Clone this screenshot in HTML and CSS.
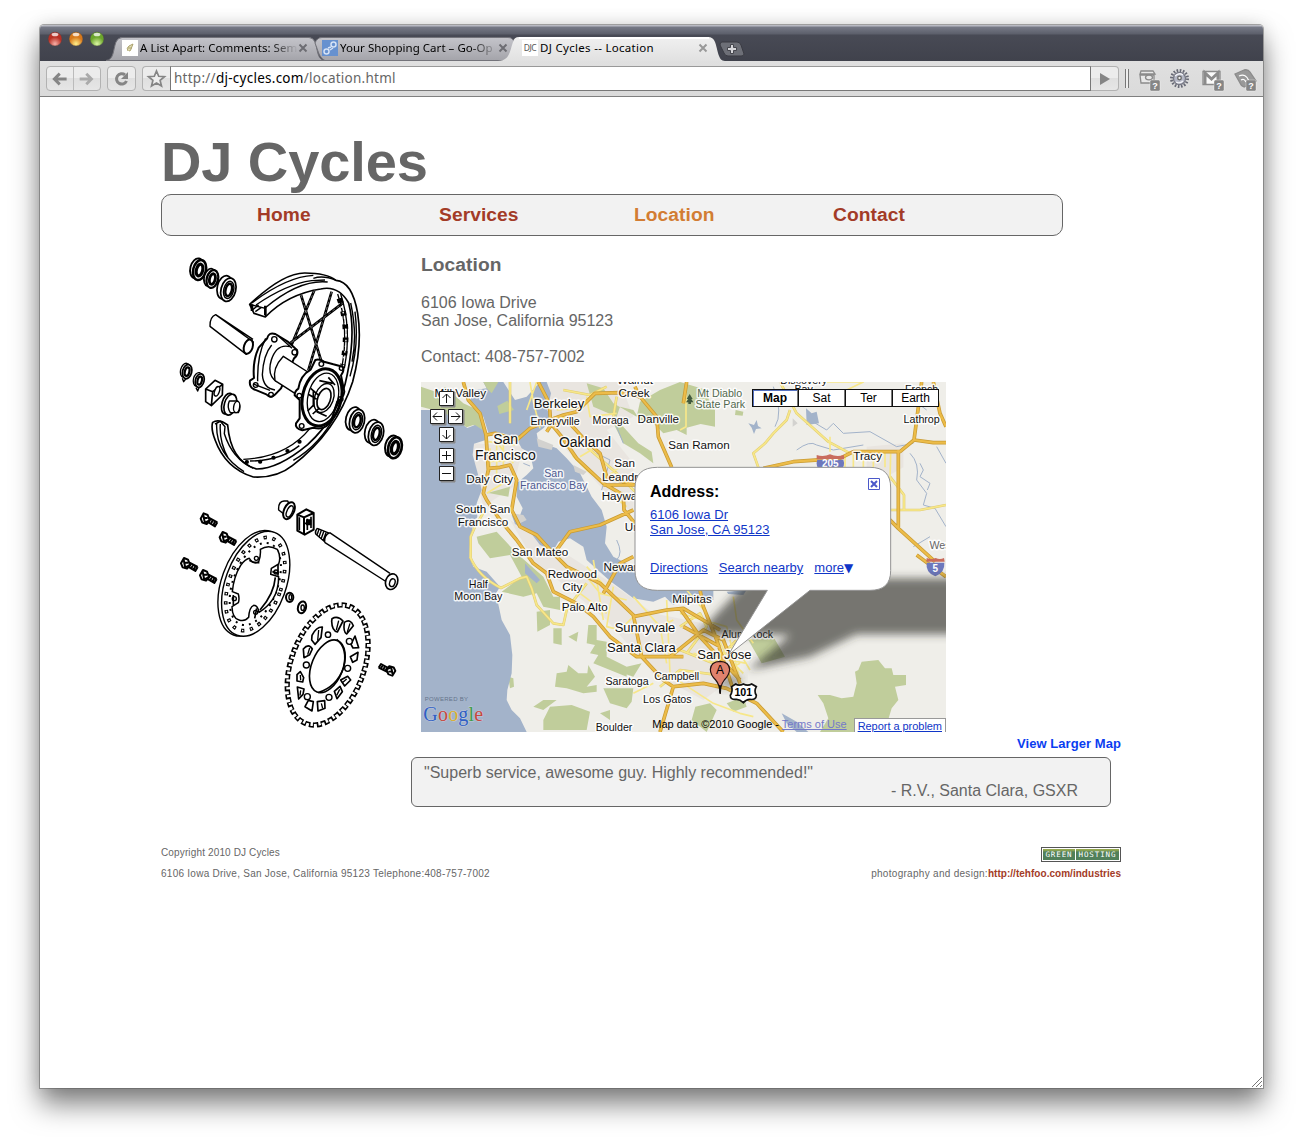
FILE: index.html
```html
<!DOCTYPE html>
<html lang="en">
<head>
<meta charset="utf-8">
<title>DJ Cycles -- Location</title>
<link rel="stylesheet" href="styles.css">
</head>
<body>
<div class="window">
  <div class="tabstrip">
    <svg class="tabshapes" width="1223" height="36" viewBox="40 25 1223 36">
      <defs>
        <linearGradient id="tabg" x1="0" y1="0" x2="0" y2="1"><stop offset="0" stop-color="#c4c4ca"/><stop offset="1" stop-color="#a4a4aa"/></linearGradient>
        <linearGradient id="actg" x1="0" y1="0" x2="0" y2="1"><stop offset="0" stop-color="#f0f0f0"/><stop offset="1" stop-color="#e1e1e1"/></linearGradient>
        <radialGradient id="red" cy=".85"><stop offset="0" stop-color="#f7b0a8"/><stop offset="1" stop-color="#b92f24"/></radialGradient>
        <radialGradient id="amber" cy=".85"><stop offset="0" stop-color="#fff08c"/><stop offset="1" stop-color="#d8791b"/></radialGradient>
        <radialGradient id="green" cy=".85"><stop offset="0" stop-color="#dcf7a4"/><stop offset="1" stop-color="#6ba52b"/></radialGradient>
      </defs>
      <path d="M106 60.500C114 60 113 50 116 42Q118 37.500 122 37.500H309Q313 37.500 315 42C318 50 317 60 325 60.500Z" fill="url(#tabg)" stroke="#73737a"/>
      <path d="M315 43Q317 37.500 322 37.500H508Q513 37.500 514 42V56Q510 60.500 505 60.500H325C319 58 318 50 315 43Z" fill="url(#tabg)" stroke="#73737a"/>
      <path d="M498 61C510 61 510 50 513 42Q514 37 519 37H708Q713 37 715 42C718 50 718 61 725 61Z" fill="url(#actg)"/>
      <path d="M519 38H709" stroke="#fff" stroke-width="2"/>
      <path d="M722 42H737Q740 42 741 45L744 54Q744 56 741 56H728Q725 56 724 53L720 45Q720 42 722 42Z" fill="#6d6f77" stroke="#3a3b43"/>
      <path d="M730.500 44.500h3v3h3v3h-3v3h-3v-3h-3v-3h3z" fill="#d6d6da" stroke="#44454c"/>
      <g stroke="#444" stroke-opacity=".35"><circle cx="55" cy="39" r="6.900" fill="url(#red)"/><circle cx="76" cy="39" r="6.900" fill="url(#amber)"/><circle cx="97" cy="39" r="6.900" fill="url(#green)"/></g>
      <g fill="#fff" opacity=".75"><ellipse cx="55" cy="34.500" rx="3.400" ry="1.800"/><ellipse cx="76" cy="34.500" rx="3.400" ry="1.800"/><ellipse cx="97" cy="34.500" rx="3.400" ry="1.800"/></g>
    </svg>
    <div class="tabs">
      <div class="tab">
        <svg class="fav" viewBox="0 0 16 16"><path fill="#fff" d="M0 0h16v16H0z"/><path d="M6 11Q4 8 7 6L11 4L9 9Q9 11 7 11M6 8h4" fill="#e4dfb5" stroke="#aaa16d"/></svg>
        <span class="label faded">A List Apart: Comments: Sem</span>
        <svg class="close" viewBox="0 0 10 10"><path d="M1.500 1.500l7 7m0-7l-7 7"/></svg>
      </div>
      <div class="tab">
        <svg class="fav" viewBox="0 0 16 16"><path fill="#6691cf" d="M0 0h16v16H0z"/><g fill="none" stroke="#d5e2f5" stroke-width="1.500"><circle cx="4.500" cy="11.500" r="2.500"/><circle cx="11.500" cy="4.500" r="2.500"/><path d="M6 8l3-1M8 10l3-2"/></g></svg>
        <span class="label faded">Your Shopping Cart – Go-Op</span>
        <svg class="close" viewBox="0 0 10 10"><path d="M1.500 1.500l7 7m0-7l-7 7"/></svg>
      </div>
      <div class="tab">
        <span class="fav djc">DJC</span>
        <span class="label third">DJ Cycles -- Location</span>
        <svg class="close light" viewBox="0 0 10 10"><path d="M1.500 1.500l7 7m0-7l-7 7"/></svg>
      </div>
    </div>
  </div>
  <div class="toolbar">
    <div class="btn pair">
      <svg width="27" height="23" viewBox="0 0 27 23"><path d="M20 12H8m5-5.500L7.500 12l5.500 5.500" fill="none" stroke="#858585" stroke-width="3"/></svg>
      <svg class="fwd" width="27" height="23" viewBox="0 0 27 23"><path d="M6 12h12m-5-5.500l5.500 5.500-5.500 5.500" fill="none" stroke="#aaa" stroke-width="3"/></svg>
    </div>
    <div class="btn reload"><svg width="27" height="23" viewBox="0 0 27 23"><path d="M17 7.800A5.200 5.200 0 1 0 18.500 14" fill="none" stroke="#858585" stroke-width="3"/><path d="M20 5v7h-7z" fill="#858585"/></svg></div>
    <div class="btn star"><svg width="27" height="23" viewBox="0 0 27 23"><path d="M13.500 4l2.200 5.300 5.800.4-4.400 3.700 1.400 5.600-5-3-5 3 1.400-5.600-4.400-3.700 5.800-.4z" fill="#eee" stroke="#858585" stroke-width="1.700"/></svg></div>
    <div class="url"><span>http://<b>dj-cycles.com</b>/location.html</span></div>
    <div class="btn go"><svg width="27" height="23" viewBox="0 0 27 23"><path d="M9 6v12l10-6z" fill="#858585"/></svg></div>
    <div class="sep"></div>
    <svg class="exts" width="122" height="26" viewBox="1137 66 122 26">
      <g fill="#e8e8e8" stroke="#8b8b8b" stroke-width="1.300">
        <path d="M1141 71h12l2 3h-15zM1140 75h14v8h-13z"/><ellipse cx="1149" cy="77.500" rx="3.500" ry="2.300"/>
        <circle cx="1179.500" cy="78.500" r="8" fill="none" stroke="#686a76" stroke-width="3" stroke-dasharray="1.600 1.540"/>
        <circle cx="1179.500" cy="78.500" r="6" fill="#b5b8c6" stroke="#777985"/><path d="M1175 76q4-4 8-1M1176 82q4 2 7-1" stroke="#f4f4f8" fill="none"/><circle cx="1179.500" cy="78" r="1.800" fill="#eee" stroke="#666"/>
        <path d="M1203 71.500h17v13h-17z" fill="#fafafa"/><path d="M1205 84V73l6.500 6 6.500-6v11" fill="none" stroke-width="3"/>
        <path d="M1235 74l9-4q4-1 6 2l6 9-12 6q-3-1-4-4z" fill="#999"/><path d="M1239 76q7-3 10 5m-8-1q3-2 5 2" fill="none" stroke="#fff"/>
      </g>
      <g fill="#858585" stroke="#fff" stroke-opacity=".5" stroke-width=".7"><rect x="1150" y="80" width="10" height="11" rx="1.500"/><rect x="1214" y="80" width="10" height="11" rx="1.500"/><rect x="1246" y="80" width="10" height="11" rx="1.500"/></g>
      <g class="q"><text x="1155" y="89">?</text><text x="1219" y="89">?</text><text x="1251" y="89">?</text></g>
    </svg>
  </div>
  <div class="page">
    <div class="site">
      <h1>DJ Cycles</h1>
      <nav class="nav"><a>Home</a><a>Services</a><a class="current">Location</a><a>Contact</a></nav>
      <div class="main">
        <svg class="art" width="240" height="490" viewBox="0 0 720 1470">
          <defs>
            <g id="bearing"><ellipse cx="-7" cy="-4" rx="21" ry="34" fill="#fff" stroke-width="5" transform="rotate(14)"/><ellipse cx="5" rx="21" ry="34" fill="#fff" stroke-width="5" transform="rotate(14)"/><ellipse cx="6" rx="14" ry="25" transform="rotate(14)"/><ellipse cx="6" rx="9" ry="18" stroke-width="7" transform="rotate(14)"/></g>
            <g id="ring"><ellipse cx="-5" cy="-3" rx="20" ry="32" fill="#fff" stroke-width="6" transform="rotate(14)"/><ellipse cx="5" rx="20" ry="32" fill="#fff" stroke-width="8" transform="rotate(14)"/><ellipse cx="5" rx="10" ry="19" stroke-width="10" transform="rotate(14)"/></g>
            <g id="bolt"><path d="M-13-2L-4-18L8-13L14 3L5 14L-8 10Z" fill="#fff" stroke-width="6"/><path d="M-5-13L0 12M-6-4H8M0 10L12 4M11-5L37 9M8 8L30 21L37 9M16-2l-5 12M23 2l-5 12M30 6l-5 12" stroke-width="6"/></g>
          </defs>
          <g fill="none" stroke="#000" stroke-width="4.200" stroke-linejoin="round">
            <use href="#ring" transform="translate(84 74) scale(.95)"/><use href="#ring" transform="translate(123 101) scale(.85)"/><use href="#bearing" transform="translate(170 133) scale(1.050)"/>
            <path d="M137 209Q119 216 120 244L229 328L250 291ZM137 209L249 283" fill="#fff"/><ellipse cx="235" cy="305" rx="13" ry="22" transform="rotate(18 235 305)" fill="#fff" stroke-width="6"/>
            <use href="#ring" transform="translate(48 379) scale(.68)"/><path d="M37 400l4 10 6-8"/>
            <use href="#ring" transform="translate(86 406) scale(.65)"/><path d="M78 428l5 10 4-10"/>
            <path d="M107 432L135 406L158 418L157 450L124 482L107 470ZM107 432L128 440L158 418M128 440L124 482" stroke-width="5"/><ellipse cx="141" cy="439" rx="7" ry="15" transform="rotate(20 141 439)" fill="#fff"/>
            <ellipse cx="172" cy="476" rx="16" ry="32" fill="#fff" stroke-width="5" transform="rotate(16 172 476)"/><ellipse cx="181" cy="479" rx="18" ry="32" fill="#fff" stroke-width="5" transform="rotate(16 181 479)"/>
            <path d="M178 468L203 468Q216 484 205 503L181 503Q170 486 178 468Z" fill="#fff"/><ellipse cx="200" cy="486" rx="9" ry="17" transform="rotate(10 200 486)" fill="#fff"/>

            <path d="M239 178Q340 83 405 84Q470 84 498 106Q547 110 563 205Q578 300 548 410Q500 560 367 662Q320 700 250 696Q166 670 135 584Q122 551 128 532Q147 520 173 540Q182 650 260 672Q325 672 413 599Q510 510 532 387Q558 260 536 174Q505 120 452 132Q351 148 286 216L252 205L239 178Z" fill="#fff" stroke-width="5"/>
            <path d="M239 178L286 190L286 216M248 194L266 180M286 188Q390 102 473 111M245 174Q350 95 430 91M258 180Q350 117 425 107L465 105M256 200L273 188M498 106Q460 90 430 100M555 200Q568 300 540 394M542 174Q563 270 546 350M499 505Q450 600 370 646M135 537L151 529L165 545L163 566Q187 641 250 670M140 536Q136 625 222 680M151 537Q147 590 175 640M220 643Q350 637 420 550M240 648Q330 648 388 602"/>
            <path d="M286 182v28M246 178v20" stroke-width="8"/>
            <g stroke-width="8"><path d="M433 136L363 304M485 140L415 376M393 150L455 352M520 173L348 304"/></g>
            <g stroke="#fff" stroke-width="1.200" stroke-dasharray="9 7"><path d="M433 136L363 304M485 140L415 376M393 150L455 352M520 173L348 304"/></g>
            <path d="M503 147Q538 250 515 370" stroke-width="4"/><path d="M512 147Q546 250 523 370" stroke-width="4"/><path d="M508 160Q540 250 518 360" stroke-width="17" stroke-dasharray="14 26"/><path d="M514 184Q538 255 521 340" stroke="#fff" stroke-width="4" stroke-dasharray="5 12"/>
            <path d="M230 651h1M270 650h1M310 638h1M352 618h1M388 590h1" stroke-width="12" stroke-linecap="round"/>

            <path d="M291 281Q296 260 316 267L352 289L381 315Q386 330 372 340L333 430L315 449Q303 462 289 448L250 432Q237 424 240 407L252 399Q247 350 266 308Z" fill="#fff" stroke-width="6"/>
            <path d="M287 280Q261 330 263 409M305 300Q280 330 277 389Q280 430 315 435M360 305Q320 295 304 345Q290 390 320 410M251 417l49 19M322 270l44 40"/>
            <circle cx="313" cy="283" r="8"/><circle cx="257" cy="420" r="7"/><circle cx="303" cy="449" r="7"/><circle cx="374" cy="322" r="8"/>
            <path d="M340 334L418 384L390 455L315 407Q306 370 340 334Z" fill="#fff" stroke="none"/><path d="M418 384L340 334Q306 370 315 407L390 455"/>
            <path d="M436 345Q449 341 462 350L490 358L518 365Q524 377 513 391L523 440Q520 462 502 469L485 523Q469 558 430 548L397 556Q374 550 378 535L389 520L389 465L374 451Q374 438 385 431Q391 391 422 374Z" fill="#fff" stroke-width="6"/>
            <ellipse cx="456" cy="457" rx="58" ry="87" transform="rotate(14 456 457)" stroke-width="9"/><ellipse cx="459" cy="457" rx="45" ry="74" transform="rotate(14 459 457)" stroke-width="4"/>
            <ellipse cx="462" cy="459" rx="28" ry="45" transform="rotate(20 462 459)"/><ellipse cx="462" cy="462" rx="19" ry="33" transform="rotate(20 462 462)" stroke-width="5"/>
            <path d="M415 448L440 463M422 430L447 452M413 498L432 479M428 507L446 491M448 407L488 415M475 397L495 420M430 435v50M440 500l30 14" stroke-width="5"/>
            <circle cx="454" cy="357" r="7"/><circle cx="514" cy="370" r="6"/><circle cx="388" cy="452" r="7"/><circle cx="395" cy="543" r="7"/><circle cx="512" cy="462" r="7"/>
            <use href="#bearing" transform="translate(556 527) scale(1.050)"/><use href="#bearing" transform="translate(613 565) scale(1.050)"/><use href="#ring" transform="translate(670 607)"/>
          </g>
          <g transform="translate(0 735)" fill="none" stroke="#000" stroke-width="4.200" stroke-linejoin="round">
            <path d="M342 33Q324 35 326 60L347 76Q367 53 353 33Z"/><ellipse cx="357" cy="62" rx="15" ry="27" transform="rotate(24 357 62)" fill="#fff" stroke-width="6"/><ellipse cx="359" cy="64" rx="8" ry="18" transform="rotate(24 359 64)"/>
            <path d="M382 74L409 58L431 69L431 119L404 134L382 122ZM382 74L402 82L431 69M402 82V134" fill="#fff" stroke-width="6"/><path d="M412 86v34M423 80v34M405 100h18M388 82v39" stroke-width="5"/><path d="M410 90h12v14h-12z" fill="#000"/>
            <path d="M438 120L446 115L659 252L648 278L440 134Z" fill="#fff" stroke="none"/><path d="M479 128L660 250M464 157L650 276M479 128Q462 136 464 157M442 115L479 130M437 132L464 155M442 115Q434 124 437 132M447 118l-6 17M454 121l-7 20M461 125l-7 20M468 128l-8 22"/><ellipse cx="665" cy="275" rx="18" ry="24" fill="#fff" transform="rotate(18 665 275)" stroke-width="5"/><ellipse cx="667" cy="278" rx="8" ry="12" transform="rotate(18 667 278)"/>
            <use href="#bolt" transform="translate(105 88)"/><use href="#bolt" transform="translate(162 144)"/><use href="#bolt" transform="translate(46 222)"/><use href="#bolt" transform="translate(103 258)"/>
            <g transform="rotate(20 253 281)"><ellipse cx="247" cy="282" rx="92" ry="165" fill="#fff"/><ellipse cx="257" cy="280" rx="91" ry="164" fill="#fff"/>
              <ellipse cx="256" cy="281" rx="78" ry="146" stroke-width="11" stroke-dasharray="10 17"/><ellipse cx="256" cy="281" rx="78" ry="146" stroke="#fff" stroke-width="4" stroke-dasharray="4 23" stroke-dashoffset="-3"/><ellipse cx="256" cy="281" rx="67" ry="129" stroke-width="6" stroke-dasharray="6 15"/></g>
            <path d="M238 205Q250 224 266 215Q273 195 271 178Q295 162 322 178Q334 200 326 222L304 235L302 253L326 260Q326 300 308 328Q292 352 267 367Q263 346 251 346Q238 351 236 382Q224 396 207 390Q187 385 186 350L205 338Q209 326 205 312L187 305Q191 260 212 226Q226 207 238 205Z" fill="#fff" stroke-width="4.500"/>
            <path d="M238 211q14 9 30 7M307 245l20 5M324 225v32M190 315v30M260 355l-6 30M316 262q-4 50-46 98" stroke-width="5"/>
            <circle cx="259" cy="205" r="6"/><circle cx="318" cy="246" r="6"/><circle cx="193" cy="326" r="6"/><circle cx="257" cy="367" r="6"/>
            <ellipse cx="359" cy="322" rx="11" ry="14" fill="#fff" stroke-width="6"/><ellipse cx="361" cy="322" rx="4" ry="8"/><ellipse cx="396" cy="352" rx="12" ry="18" fill="#fff" stroke-width="6" transform="rotate(15 396 352)"/><ellipse cx="398" cy="353" rx="5" ry="8"/>
            <g transform="rotate(20 473 525)"><ellipse cx="473" cy="525" rx="110" ry="188" stroke-width="15" pathLength="960" stroke-dasharray="15 9"/><ellipse cx="473" cy="525" rx="104" ry="182" fill="#fff" stroke-width="4.500"/><ellipse cx="473" cy="525" rx="106" ry="184" stroke="#fff" stroke-width="13" pathLength="960" stroke-dasharray="7 17" stroke-dashoffset="-4"/></g>
            <g transform="rotate(22 472 529)"><ellipse cx="472" cy="529" rx="47" ry="83" stroke-width="5"/></g><path d="M500 448Q535 475 520 535Q500 590 445 608" stroke-width="5"/>
            <g fill="#fff" stroke-width="5"><path d="M486 386Q503 376 519 393L502 426Q486 423 485 394Z"/><path d="M523 397Q542 385 550 407L530 432Q519 426 523 397Z"/><path d="M426 436Q439 410 457 411L453 443L435 463L425 450Z"/><path d="M400 477Q416 458 427 477L419 494L402 503Z"/><path d="M543 463L555 438L566 473L549 474Z"/><path d="M541 500L564 487L561 510L548 517Z"/><path d="M381 554L391 545L401 563L398 576L381 573Z"/><path d="M382 591L402 597L399 613L386 627Z"/><path d="M405 650L415 631L430 635L426 663Z"/><path d="M442 635L464 632L465 655L444 663Z"/><path d="M493 604L510 589L517 605L501 626Z"/><path d="M512 570L533 559L542 570L524 588Z"/></g>
            <g fill="#fff"><circle cx="474" cy="434" r="8"/><circle cx="538" cy="454" r="9"/><circle cx="409" cy="525" r="9"/><circle cx="533" cy="535" r="9"/><circle cx="412" cy="620" r="9"/><circle cx="477" cy="622" r="9"/></g>
            <path d="M506 392l-7 28M540 400l-8 26M446 420l-3 32M419 474l-6 20M391 555l1 16M392 601l-2 16M454 640l4 15M530 567l-14 12M509 598l-9 18" stroke-width="4"/>
            <use href="#bolt" transform="translate(663 541) rotate(180) scale(1 .9)"/>
          </g>
        </svg>
        <div class="content">
          <h2>Location</h2>
          <p>6106 Iowa Drive<br>San Jose, California 95123</p>
          <p>Contact: 408-757-7002</p>
          <div class="map">
            <svg width="525" height="350" viewBox="3 6 1575 1050">
              <defs><filter id="blur" x="-20%" y="-50%" width="140%" height="200%"><feGaussianBlur stdDeviation="12"/></filter></defs>
              <path fill="#efeee9" d="M0 0H1600V1070H0z"/>
              <path fill="#e9e5e0" d="M390 6L600 6L640 110L560 150L640 250V400L560 340L440 210L380 110ZM160 190L310 200L280 320L190 380L160 260ZM270 420L420 510L560 600L700 700L900 740L960 880L850 960L700 880L560 720L340 540ZM1340 200L1450 190L1450 262L1400 290L1340 262Z"/>
              <path fill="#c0cd9b" d="M3 20L60 40L75 20L130 70L185 95L197 155L160 135L140 142L60 95L3 80ZM500 10L550 25L580 70L650 110L660 65L720 30L780 6L860 30L870 75L885 90V140L842 132L800 143L800 165L770 150L730 160L700 130L660 120L640 90L600 80L590 110L520 80ZM600 130L655 190L695 215L700 250L660 220L610 190L580 130ZM235 75L262 60L280 90L238 100ZM170 470L230 455L290 520L370 590L400 650L420 650L420 690L370 680L350 640L310 650L245 635L305 590L270 525L210 535L175 490ZM350 695L390 690L390 735L352 755ZM400 745L425 745L425 795L400 790ZM410 880L440 875L445 855L475 880L502 880L505 855L525 890L500 920L530 915L530 935L490 940L440 925L405 920ZM445 770L475 755L470 785ZM505 735L530 735L530 780L560 785L560 830L620 860L620 890L570 870L520 850L535 825L510 820L525 795L500 790ZM550 925L640 925L635 965L620 985L570 970ZM370 1020L390 980L455 975L510 995L500 1050L370 1050ZM540 1000L570 990L570 1020ZM265 890L280 895L282 920L270 925ZM340 980L370 960L410 960L370 990ZM620 860L665 850L640 890L610 880ZM985 780L1060 770L1095 830L1025 850ZM1193 945L1230 945L1265 955L1300 950L1310 910L1305 875L1315 870L1325 845L1375 840L1395 865L1415 865L1420 885L1458 885L1458 915L1425 920L1435 960L1415 985L1405 1018L1405 1056H1200L1225 1015L1210 970ZM826 980L870 970L890 990L860 1056L815 1020ZM920 970L970 950L980 980L940 995ZM200 340L270 320L265 350L210 340ZM947 90L970 95L968 107L945 105Z"/>
              <g fill="#a3b3ca">
                <path d="M3 90L60 90L100 115L142 144L165 135L198 156L197 180L162 191L158 225L176 290L185 330L170 370L172 410L158 440L150 490L148 528L160 560L200 575L240 620L228 640L245 720L270 765L277 825L275 880L262 930L260 960L275 990L300 1015L320 1056H3Z"/>
                <path d="M150 60L165 30L200 25L190 6H250L285 60L320 50L360 6H380L393 40L382 90L395 120L370 145L350 160L355 185L410 205L440 235L480 280L515 350L545 390L560 440L555 490L580 530L640 560L700 600L880 625L880 660L790 655L760 675L735 650L700 665L640 655L600 625L570 603L500 540L490 500L450 475L415 485L400 512L360 495L335 462L285 432L275 405L298 412L308 385L290 350L290 310L320 285L340 265L330 220L305 205L290 177L250 160L205 158L190 110Z"/>
                <path d="M920 635L980 630L970 645L925 642ZM1158 85L1175 100L1190 95L1197 130L1160 135ZM985 130L1002 135L1010 120L1014 138L1025 145L1008 147L1002 162L995 143Z"/>
                <path d="M1085 1000L1130 1025L1165 1056H1130L1100 1030ZM315 550L360 600L350 610L315 580Z"/>
              </g>
              <path fill="#c0cd9b" d="M190 6H235L215 40L200 25ZM232 78L262 62L282 90L238 102Z"/>
              <path fill="#d3d2cf" d="M350 175L400 195L395 210L355 200ZM275 400L310 405L320 420L300 430ZM460 255L500 275L490 285L465 275ZM1118 115l15 15-15 10z"/>
              <g fill="none" stroke="#a3b3ca" stroke-width="3"><path d="M1060 20Q1090 100 1065 140M1130 210Q1170 180 1190 195L1240 210L1330 195M1170 120L1220 150L1240 130L1270 160L1350 155L1430 200L1480 190M1470 220Q1500 250 1490 300L1520 340L1510 375L1545 385L1578 440M530 220L570 240L545 330M590 140L610 190M590 480Q610 520 590 540M310 250l20 8M1550 200L1578 250M1500 250l10 20-10 20 30 20-8 20M1380 50l50 20 50-10 40 30M1480 500l50-30"/></g>
              <g fill="none" stroke="#e0cc72" stroke-width="8" stroke-linejoin="round"><path d="M150 530Q175 590 243 624L300 595L320 590L335 625L350 675L400 730L430 735L440 690L465 655L500 610M152 530V470L165 440L195 390M270 130V6M430 30L510 45L560 20M590 50L580 110M660 350L590 280L500 200L450 185M1080 6L1130 100L1225 185L1290 220M1110 90L1100 120L1060 160L1035 190L1000 220L1015 262M1410 290L1452 345L1452 390M1412 390L1500 390L1578 375M780 740L840 700L860 740L800 820M720 920L780 870L930 890M780 810L880 850L950 780"/></g>
              <g fill="none" stroke="#f7e789" stroke-width="5" stroke-linejoin="round"><path d="M150 530Q175 590 243 624L300 595L320 590L335 625L350 675L400 730L430 735L440 690L465 655L500 610M152 530V470L165 440L195 390M270 130V6M320 90L350 6M430 30L510 45L560 20M500 50L510 110L590 100M590 50L580 110M660 350L590 280L500 200L450 185M440 170L460 230L500 270L580 330M330 6L340 65L360 145M1080 6L1130 100L1225 185L1290 220M1110 90L1100 120L1060 160L1035 190L1000 220L1015 262M1220 6L1330 6L1280 30M1410 290L1452 345L1452 390M1412 390L1500 390L1578 375M1412 220L1410 300L1390 300M1230 170V215M1300 220V262M1330 215V262M1360 225V262M1395 218V262M780 150L798 140V6M940 650L950 720L1000 790M780 740L840 700L860 740L800 820M720 920L780 870L930 890M780 810L880 850L950 780M800 630L860 700L920 830L970 880M640 940L700 910M700 750L760 720M500 590L540 640L620 660M480 640L560 700M500 560L640 710L610 740M520 540L550 720M580 620L560 740L640 760M640 650L720 740L740 850M740 660L750 880M780 700L920 740L960 900M820 820L980 850M230 160L230 300M205 185L285 195M205 215L290 230M205 245L280 240M250 180L250 260M210 205V275M200 340L250 310M225 180L280 250M780 905L880 970L960 1000L1000 1010M410 90L470 85M400 75L460 70M400 110L450 115M455 200L500 190M480 230L530 200M550 300L600 260M570 340L620 380M940 800V880M960 820L990 870M900 880L960 850M1250 235V262M1275 232V262"/></g>
              <path id="hw" d="M130 6L145 60L180 100L198 165L225 160L290 180L330 145L390 120L430 105L470 95L525 40L600 38L660 50L710 110L715 170L755 262M355 6L388 70L392 130L425 170L470 235L550 310L610 345L612 390L645 430M380 155L390 140L440 120L495 180L540 220L560 290L645 315M550 315H645M645 20L660 55M198 165L205 270L190 340L200 360L240 420L290 480L340 550L380 580L400 635L470 670L520 710L570 770L650 830L720 830L790 830M205 265L240 262L270 255L290 300L275 390L300 440L350 465L400 520L440 560L540 610L640 705L665 830L730 900L760 920L850 910L920 925L1010 970L1090 1056M410 510L450 455L540 435L640 390M550 640L600 550L640 530M640 710L740 690L790 685L900 750M780 685L840 770L960 900M750 830L850 750L910 780L960 910M840 630L850 680L890 780L940 930M790 740L900 800M760 920L720 1056M800 6L790 70M1030 265L1120 245L1260 235L1300 215L1440 215L1482 180L1490 120L1505 6M1482 180L1540 188H1578M1435 210V445L1400 410M1435 445L1545 545M1540 6L1560 100L1578 140M1490 525L1578 590" fill="none" stroke="#c99b33" stroke-width="11" stroke-linejoin="round"/>
              <path d="M130 6L145 60L180 100L198 165L225 160L290 180L330 145L390 120L430 105L470 95L525 40L600 38L660 50L710 110L715 170L755 262M355 6L388 70L392 130L425 170L470 235L550 310L610 345L612 390L645 430M380 155L390 140L440 120L495 180L540 220L560 290L645 315M550 315H645M645 20L660 55M198 165L205 270L190 340L200 360L240 420L290 480L340 550L380 580L400 635L470 670L520 710L570 770L650 830L720 830L790 830M205 265L240 262L270 255L290 300L275 390L300 440L350 465L400 520L440 560L540 610L640 705L665 830L730 900L760 920L850 910L920 925L1010 970L1090 1056M410 510L450 455L540 435L640 390M550 640L600 550L640 530M640 710L740 690L790 685L900 750M780 685L840 770L960 900M750 830L850 750L910 780L960 910M840 630L850 680L890 780L940 930M790 740L900 800M760 920L720 1056M800 6L790 70M1030 265L1120 245L1260 235L1300 215L1440 215L1482 180L1490 120L1505 6M1482 180L1540 188H1578M1435 210V445L1400 410M1435 445L1545 545M1540 6L1560 100L1578 140M1490 525L1578 590" fill="none" stroke="#ecbc49" stroke-width="6.500" stroke-linejoin="round"/>
              <g><path d="M1190 225Q1210 232 1230 223Q1250 232 1272 225V238H1190Z" fill="#c96c5d"/><path d="M1192 239h78q8 20-12 36h-54q-20-16-12-36" fill="#6d78bd"/><path d="M1520 534Q1535 540 1547 534Q1560 540 1572 534L1574 545H1519Z" fill="#c96c5d"/><path d="M1520 548H1573Q1575 578 1546 589Q1516 578 1520 548Z" fill="#6d78bd"/></g>
              <g class="shield"><text x="1231" y="261">205</text><text x="1546" y="576">5</text></g>
              <path d="M809 42l-9 15h5l-7 10h7v5h8v-5h7l-6-10h4z" fill="#40593d"/>
              <g class="lbl">
                <g class="s14"><text x="257" y="193">San</text><text x="256" y="241">Francisco</text><text x="495" y="200">Oakland</text></g>
                <g class="s13"><text x="417" y="83">Berkeley</text><text x="675" y="755">Sunnyvale</text><text x="664" y="815">Santa Clara</text><text x="913" y="838">San Jose</text></g>
                <g class="s12"><text x="121" y="51">Mill Valley</text><text x="642" y="52">Creek</text><text x="645" y="13">Walnut</text><text x="715" y="129">Danville</text><text x="837" y="206">San Ramon</text><text x="209" y="309">Daly City</text><text x="189" y="398">South San</text><text x="189" y="438">Francisco</text><text x="360" y="527">San Mateo</text><text x="614" y="261">San</text><text x="610" y="304">Leandro</text><text x="614" y="360">Hayward</text><text x="660" y="453">Union</text><text x="457" y="594">Redwood</text><text x="457" y="632">City</text><text x="610" y="572">Newark</text><text x="494" y="692">Palo Alto</text><text x="816" y="668">Milpitas</text><text x="1343" y="240">Tracy</text></g>
                <g class="s11"><text x="405" y="135">Emeryville</text><text x="572" y="131">Moraga</text><text x="175" y="623">Half</text><text x="175" y="659">Moon Bay</text><text x="621" y="916">Saratoga</text><text x="770" y="901">Campbell</text><text x="742" y="969">Los Gatos</text><text x="582" y="1053">Boulder</text><text x="982" y="773">Alum Rock</text><text x="1505" y="128">Lathrop</text><text x="1151" y="13">Discovery</text><text x="1151" y="40">Bay</text><text x="1505" y="40">French</text><text x="1560" y="507" fill="#666">Wes</text></g>
                <g class="s11 park"><text x="899" y="51">Mt Diablo</text><text x="901" y="83">State Park</text></g>
                <g class="s11 bay"><text x="401" y="290">San</text><text x="401" y="326">Francisco Bay</text></g>
              </g>
              <path filter="url(#blur)" fill="#30302c" fill-opacity=".64" d="M830 765L990 595H1650V763H1310L1170 830L985 870L1110 765Z"/>
              <path filter="url(#blur)" fill="#30302c" fill-opacity=".6" d="M900 925L915 895L968 890L955 912Z"/>
              <path d="M712 262H1350Q1412 262 1412 324V572Q1412 631 1350 631H1170L925 825L1042 631H712Q645 631 645 572V324Q645 262 712 262Z" fill="#fff" stroke="#939393" stroke-width="3"/>
              <path d="M900 940Q900 915 887 900Q871 885 871 868Q873 845 900 844Q927 845 929 868Q928 885 913 900Q901 915 901 940Z" fill="#e0826d" stroke="#211" stroke-width="3.500"/><path d="M900 916v22" stroke="#111" stroke-width="6"/>
              <text class="pin" x="900" y="883">A</text>
              <path d="M935 920l12-8q10 7 23 0q13 7 25 0l14 8q-8 14 0 26q0 15-20 12q-10 0-19 10q-10-10-20-10q-20 2-19-12q8-12 4-26z" fill="#fff" stroke="#111" stroke-width="5"/><text class="route" x="970" y="948">101</text>
              <text class="powered" x="14" y="963">POWERED BY</text>
              <text class="google" x="10" y="1022"><tspan fill="#315fc4">G</tspan><tspan fill="#c8473f">o</tspan><tspan fill="#d9ad2e">o</tspan><tspan fill="#315fc4">g</tspan><tspan fill="#3f9c4c">l</tspan><tspan fill="#c8473f">e</tspan></text>
            </svg>
            <svg class="pan" width="36" height="96" viewBox="429 389 36 96">
              <g stroke="#888" fill="#888"><path d="M441 392h14v15h-14zM432 410h14v15h-14zM450 410h14v15h-14zM441 429h14v14h-14zM441 449h14v15h-14zM441 467h14v15h-14z"/></g>
              <g fill="#fff" stroke="#222"><path d="M439.500 391.500h14v14h-14zM430.500 409.500h14v14h-14zM448.500 409.500h14v14h-14zM439.500 427.500h14v14h-14zM439.500 448.500h14v14h-14zM439.500 466.500h14v14h-14z"/></g>
              <path fill="none" stroke="#111" d="M446.500 403v-9m-4 4l4-4 4 4M442 416.500h-9m4-4l-4 4 4 4M451 416.500h9m-4-4l4 4-4 4M446.500 430v9m-4-4l4 4 4-4M442 455.500h9M446.500 451v9M442 473.500h9"/>
            </svg>
            <div class="types"><b>Map</b><span>Sat</span><span>Ter</span><span>Earth</span></div>
            <div class="bubble">
              <svg class="x" width="12" height="12" viewBox="0 0 12 12"><path d="M.5.500h11v11H.500z" fill="#fff" stroke="#4b58c9"/><path d="M3 3l6 6m0-6L3 9" stroke="#4b58c9" stroke-width="2"/></svg>
              <strong>Address:</strong>
              <a>6106 Iowa Dr<br>San Jose, CA 95123</a>
              <div class="actions"><a>Directions</a><a>Search nearby</a><span><a>more</a><i>▼</i></span></div>
            </div>
            <div class="credits"><span>Map data ©2010 Google - <u>Terms of Use</u></span><a>Report a problem</a></div>
          </div>
          <a class="larger">View Larger Map</a>
          <blockquote>"Superb service, awesome guy. Highly recommended!"<cite>- R.V., Santa Clara, GSXR</cite></blockquote>
        </div>
      </div>
      <footer>
        <div class="frow"><span>Copyright 2010 DJ Cycles</span><span class="badge"><em>GREEN</em><em>HOSTING</em></span></div>
        <div class="frow"><span class="addr">6106 Iowa Drive, San Jose, California 95123 Telephone:408-757-7002</span><span class="credit">photography and design:<b>http://tehfoo.com/industries</b></span></div>
      </footer>
    </div>
    <svg class="grip" width="12" height="12" viewBox="0 0 12 12"><path d="M1 11L11 1M5 11l6-6M9 11l2-2" stroke="#777"/></svg>
  </div>
</div>
</body>
</html>
```
FILE: styles.css
```css
* { box-sizing: border-box; }
body { margin: 0; min-height: 1143px; padding: 25px 0 0 40px; background: #fff; font-family: "Liberation Sans", Arial, sans-serif; overflow: hidden; }
svg { display: block; }
.window { width: 1223px; height: 1063px; display: flex; flex-direction: column; border-radius: 4px 4px 0 0; background: #fff; box-shadow: 0 0 0 1px rgba(90,90,90,.5), 0 16px 28px 0 rgba(0,0,0,.5), 0 0 18px rgba(0,0,0,.12); }
.tabstrip { position: relative; height: 36px; border-radius: 4px 4px 0 0; background: linear-gradient(#b9bac3 0, #b9bac3 1px, #777a87 2px, #5c5f6b 9px, #484a55 10px, #40424c 100%); font-family: "Noto Sans", "Open Sans", sans-serif; }
.tabshapes { position: absolute; left: 0; top: 0; }
.tabs { position: relative; display: flex; padding: 15px 0 0 82px; }
.tab { width: 200px; height: 16px; display: flex; align-items: center; }
.fav { width: 16px; height: 16px; flex: none; background: #fff; }
.djc { font-size: 8.500px; line-height: 16px; color: #555; text-align: center; letter-spacing: -.4px; }
.label { width: 157px; margin-left: 2px; font-size: 11.500px; line-height: 16px; letter-spacing: .03px; white-space: nowrap; overflow: hidden; color: #000; }
.third { letter-spacing: .3px; }
.faded { -webkit-mask-image: linear-gradient(90deg, #000 130px, transparent 158px); mask-image: linear-gradient(90deg, #000 130px, transparent 158px); }
.close { width: 10px; height: 10px; margin-left: 1px; stroke: #6d6d73; stroke-width: 2; fill: none; }
.close.light { stroke: #999; }
.toolbar { height: 36px; display: flex; align-items: flex-start; padding: 5px 0 0 6px; background: linear-gradient(#e0e0e0, #dadada); border-bottom: 1px solid #7f7f7f; }
.btn { height: 25px; border: 1px solid #b2b2b2; border-radius: 4px; background: linear-gradient(#ececec 50%, #dfdfdf 50%, #e6e6e6); }
.pair { width: 55px; display: flex; margin-right: 6px; }
.fwd { border-left: 1px solid #bbb; }
.reload { width: 29px; margin-right: 6px; }
.star { width: 29px; border-radius: 4px 0 0 4px; border-right: 0; }
.url { width: 921px; margin-left: -1px; height: 25px; border: 1px solid #777; border-top-color: #999; background: #fff; padding-left: 3px; font: 13.500px/22px "Noto Sans", "Open Sans", sans-serif; color: #666; letter-spacing: .26px; white-space: nowrap; }
.url b { font-weight: 400; color: #000; }
.go { width: 28px; border-left: 0; border-radius: 0 4px 4px 0; }
.sep { width: 4px; height: 19px; margin: 3px 8px 0 6px; border: solid #777; border-width: 0 1px; background: #eee; }
.q { font: bold 9px "Liberation Sans", sans-serif; text-anchor: middle; fill: #fff; }
.page { position: relative; flex: 1; background: #fff; }
.grip { position: absolute; right: 0; bottom: 0; }
.site { width: 960px; margin-left: 121px; padding-top: 33px; color: #666; }
h1 { margin: 0; font-size: 56px; line-height: 64px; letter-spacing: -.1px; }
.nav { width: 902px; height: 42px; border: 1px solid #666; border-radius: 10px; background: #f2f2f2; padding-left: 95px; display: grid; grid-template-columns: 182px 195px 199px 1fr; font-weight: bold; font-size: 19.200px; line-height: 39px; letter-spacing: .08px; color: #a33b27; }
.current { color: #d27d33; }
.main { display: grid; grid-template-columns: 260px 700px; height: 571px; align-items: start; }
.art { margin: 9px 0 0 9px; }
.content { padding-top: 18px; font-size: 16px; line-height: 18px; }
h2 { margin: 0; font-size: 19.200px; line-height: 21px; letter-spacing: .08px; }
p { margin: 18px 0 0; }
h2 + p { margin-top: 19px; }
.map { position: relative; width: 525px; height: 350px; margin-top: 16px; overflow: hidden; color: #000; }
.lbl { text-anchor: middle; fill: #111; stroke: #fff; stroke-opacity: .85; stroke-width: 9px; stroke-linejoin: round; paint-order: stroke; }
.s14 { font-size: 42px; } .s13 { font-size: 39px; } .s12 { font-size: 35px; } .s11 { font-size: 32px; }
.park { fill: #53694f; } .bay { fill: #4d5990; }
.shield { font: bold 30px "Liberation Sans", sans-serif; text-anchor: middle; fill: #fff; }
.pin { font-size: 36px; text-anchor: middle; }
.route { font: bold 32px "Liberation Sans", sans-serif; text-anchor: middle; }
.powered { font-size: 18px; letter-spacing: .9px; fill: #65738a; }
.google { font: 60px "Liberation Serif", serif; letter-spacing: .5px; stroke: #fff; stroke-opacity: .35; stroke-width: 3px; paint-order: stroke; }
.pan { position: absolute; left: 8px; top: 7px; }
.types { position: absolute; right: 7px; top: 7px; display: grid; grid-template-columns: 46px 47px 47px 45px; border: 1px solid #111; background: #111; font-size: 12px; line-height: 16px; text-align: center; }
.types > * { background: #fff; margin-right: 1px; border-right: 1px solid #777; height: 16px; }
.types > :last-child { margin: 0; border: 0; }
.types b { box-shadow: inset 1px 1px #5672c0; }
.bubble { position: absolute; left: 229px; top: 101px; width: 230px; font-size: 13px; line-height: 15px; }
.bubble .x { position: absolute; right: 0; top: -5px; }
.bubble strong { display: block; font-size: 16px; line-height: 18px; margin-bottom: 6px; }
.bubble a { color: #1036c8; text-decoration: underline; }
.bubble > a { letter-spacing: .06px; }
.actions { display: flex; gap: 11px; margin-top: 23px; }
.actions i { font-style: normal; color: #1036c8; font: 12px/12px "DejaVu Sans", sans-serif; }
.credits { position: absolute; right: 0; bottom: 0; display: flex; align-items: flex-end; gap: 7px; font-size: 11px; line-height: 12px; white-space: nowrap; }
.credits u { color: #7379c9; }
.credits span { padding-bottom: 2px; }
.credits a { border: 1px solid #999; border-bottom: 0; background: #fff; color: #1036c8; text-decoration: underline; padding: 1px 3px 0; letter-spacing: -.04px; }
.larger { display: block; text-align: right; color: #0a3df0; font-weight: bold; font-size: 13px; line-height: 18px; padding-top: 3px; height: 25px; letter-spacing: .06px; }
blockquote { margin: 0 0 0 -10px; width: 700px; height: 50px; border: 1px solid #666; border-radius: 6px; background: #f2f2f2; padding: 6px 32px 0 12px; }
cite { display: block; font-style: normal; text-align: right; }
footer { margin-top: 36px; font-size: 10px; }
.frow { display: flex; justify-content: space-between; height: 21px; line-height: 20px; letter-spacing: .14px; }
.addr { letter-spacing: .26px; }
.credit { letter-spacing: .29px; }
.badge { margin-top: 4px; width: 80px; height: 15px; border: 1px solid #555; padding: 1px; display: grid; grid-template-columns: 32px 43px; gap: 1px; background: #fff; }
.badge em { font: normal 7.500px/11px "DejaVu Sans Mono", monospace; color: #fff; background: linear-gradient(#94a84e 1px, #51805a 3px); text-align: center; letter-spacing: .9px; height: 11px; }
.credit b { color: #a33b27; letter-spacing: .03px; }
```
